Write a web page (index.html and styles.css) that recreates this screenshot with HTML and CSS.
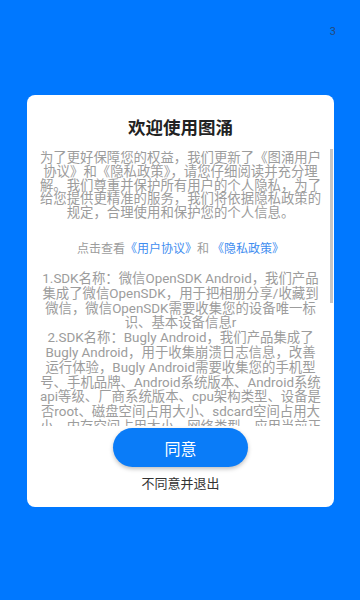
FILE: index.html
```html
<!DOCTYPE html>
<html lang="zh">
<head>
<meta charset="utf-8">
<title>欢迎使用图涌</title>
<link rel="stylesheet" href="styles.css">
</head>
<body>
<div class="page">
  <div class="topbar"><span class="count">3</span></div>
  <div class="card">
    <h1 class="title">欢迎使用图涌</h1>
    <div class="scroll">
      <p class="intro">为了更好保障您的权益，我们更新了《图涌用户协议》和《隐私政策》，请您仔细阅读并充分理解。我们尊重并保护所有用户的个人隐私，为了给您提供更精准的服务，我们将依据隐私政策的规定，合理使用和保护您的个人信息。</p>
      <p class="links">点击查看<a class="link" href="#">《用户协议》</a>和 <a class="link" href="#">《隐私政策》</a></p>
      <p class="sdk">1.SDK名称：微信OpenSDK Android，我们产品<br>集成了微信OpenSDK，用于把相册分享/收藏到<br>微信，微信OpenSDK需要收集您的设备唯一标<br>识、基本设备信息r<br>2.SDK名称：Bugly Android，我们产品集成了<br>Bugly Android，用于收集崩溃日志信息，改善<br>运行体验，Bugly Android需要收集您的手机型<br>号、手机品牌、Android系统版本、Android系统<br>api等级、厂商系统版本、cpu架构类型、设备是<br>否root、磁盘空间占用大小、sdcard空间占用大<br>小、内存空间占用大小、网络类型、应用当前正<br>在运行的页面</p>
    </div>
    <div class="scrollbar"></div>
    <button class="agree" type="button">同意</button>
    <div class="disagree">不同意并退出</div>
  </div>
</div>
</body>
</html>
```
FILE: styles.css
```css
* { box-sizing: border-box; }
html, body { margin: 0; padding: 0; }
body {
  background: #0078ff;
  font-family: Roboto, "Noto Sans CJK SC", sans-serif;
}
.page {
  width: 360px;
  height: 600px;
  background: #0078ff;
  overflow: hidden;
}
.topbar {
  height: 95px;
  display: flex;
  justify-content: flex-end;
  align-items: flex-start;
  padding: 25px 24px 0 0;
}
.count {
  font-size: 11px;
  line-height: 14px;
  color: #244a78;
}
.card {
  position: relative;
  margin: 0 26px 0 27px;
  background: #fff;
  border-radius: 8px;
  padding: 21px 0 14px;
  display: flex;
  flex-direction: column;
  align-items: center;
}
.title {
  margin: 0;
  font-size: 17.5px;
  line-height: 24px;
  font-weight: bold;
  color: #222;
}
.scroll {
  margin-top: 11px;
  width: 282px;
  height: 275px;
  overflow: hidden;
  text-align: center;
  color: #9c9c9c;
  font-size: 13.4px;
}
.scroll p { margin: 0; }
.intro {
  line-height: 13.75px;
}
.links {
  margin-top: 22.5px !important;
  font-size: 12px;
  line-height: 14.8px;
  white-space: nowrap;
}
.link {
  color: #3f8ef0;
  text-decoration: none;
}
.sdk {
  margin-top: 15px !important;
  line-height: 14.8px;
  white-space: nowrap;
}
.scrollbar {
  position: absolute;
  left: 303px;
  top: 54px;
  width: 3px;
  height: 154px;
  background: #c6c6c6;
}
.agree {
  margin-top: 2px;
  width: 135px;
  height: 39px;
  border: none;
  border-radius: 20px;
  background: #0a7cf8;
  color: #fff;
  font-family: Roboto, "Noto Sans CJK SC", sans-serif;
  font-size: 16px;
  box-shadow: 0 2px 4px rgba(0, 0, 0, 0.25);
  padding: 0;
}
.disagree {
  margin-top: 8px;
  font-size: 13px;
  line-height: 18px;
  color: #333;
}
```
